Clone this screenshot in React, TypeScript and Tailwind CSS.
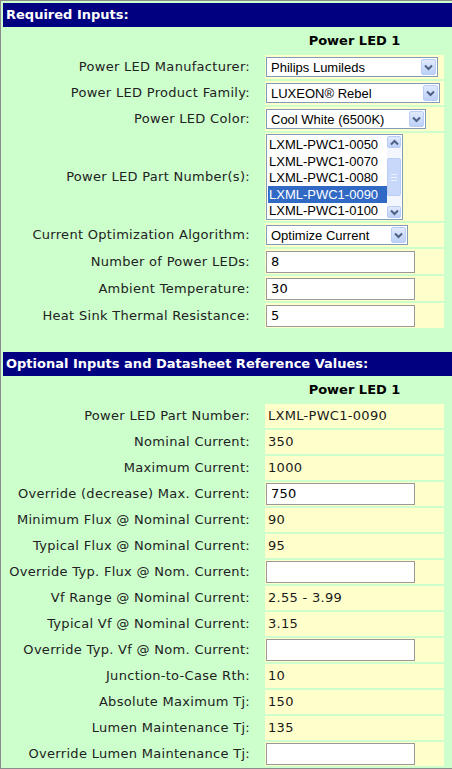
import React from "react";

const verdana = "font-['DejaVu_Sans',Verdana,sans-serif]";
const arial = "font-['Liberation_Sans',Arial,sans-serif]";

interface FieldRow {
  label: string;
  value?: string;
  input?: string;
}

const datasheetRows: FieldRow[] = [
  { label: "Power LED Part Number:", value: "LXML-PWC1-0090" },
  { label: "Nominal Current:", value: "350" },
  { label: "Maximum Current:", value: "1000" },
  { label: "Override (decrease) Max. Current:", input: "750" },
  { label: "Minimum Flux @ Nominal Current:", value: "90" },
  { label: "Typical Flux @ Nominal Current:", value: "95" },
  { label: "Override Typ. Flux @ Nom. Current:", input: "" },
  { label: "Vf Range @ Nominal Current:", value: "2.55 - 3.99" },
  { label: "Typical Vf @ Nominal Current:", value: "3.15" },
  { label: "Override Typ. Vf @ Nom. Current:", input: "" },
  { label: "Junction-to-Case Rth:", value: "10" },
  { label: "Absolute Maximum Tj:", value: "150" },
  { label: "Lumen Maintenance Tj:", value: "135" },
  { label: "Override Lumen Maintenance Tj:", input: "" },
];

const partNumbers = [
  "LXML-PWC1-0050",
  "LXML-PWC1-0070",
  "LXML-PWC1-0080",
  "LXML-PWC1-0090",
  "LXML-PWC1-0100",
];

const Chevron: React.FC<{ up?: boolean }> = ({ up }) => (
  <svg width="9" height="7" viewBox="0 0 9 7">
    <path
      d={up ? "M1 5.5 L4.5 2 L8 5.5" : "M1 1.5 L4.5 5 L8 1.5"}
      fill="none"
      stroke="#4d6185"
      strokeWidth="2"
    />
  </svg>
);

const XpButton: React.FC<{ up?: boolean; className?: string }> = ({
  up,
  className = "",
}) => (
  <div
    className={`flex items-center justify-center rounded-[2px] border border-[#b9cdf7] bg-gradient-to-b from-[#e1eafe] to-[#bcd0f8] ${className}`}
  >
    <Chevron up={up} />
  </div>
);

const Dropdown: React.FC<{ text: string; width: string }> = ({
  text,
  width,
}) => (
  <div
    className={`flex h-[20px] items-center justify-between border border-[#7f9db9] bg-white pl-[4px] pr-[1px] ${width}`}
  >
    <span className={`${arial} text-[13px] leading-none text-black`}>
      {text}
    </span>
    <XpButton className="h-[16px] w-[15px]" />
  </div>
);

const TextBox: React.FC<{ value: string }> = ({ value }) => (
  <div
    className={`flex h-[22px] w-[149px] items-center border border-[#999] bg-white pl-[4px] ${verdana} text-[13px] tracking-[0.2px] text-black`}
  >
    {value}
  </div>
);

const PartList: React.FC = () => (
  <div className="flex h-[86px] w-[137px] border border-[#7f9db9] bg-white p-[1px]">
    <div className={`flex-1 pt-[1px] ${arial} text-[13px]`}>
      {partNumbers.map((p) => (
        <div
          key={p}
          className={`flex h-[16.4px] items-center pl-[1px] ${
            p === "LXML-PWC1-0090"
              ? "bg-[#316ac5] text-white"
              : "text-black"
          }`}
        >
          {p}
        </div>
      ))}
    </div>
    <div className="flex w-[14px] flex-col bg-[#f3f6fd]">
      <XpButton up className="h-[15px]" />
      <div className="flex flex-1 flex-col justify-center py-[10px]">
        <div className="flex h-[38px] flex-col items-center justify-center gap-[2px] rounded-[2px] border border-[#b9cdf7] bg-[#c8d8fb]">
          <div className="h-px w-[6px] bg-[#eef3ff]" />
          <div className="h-px w-[6px] bg-[#eef3ff]" />
          <div className="h-px w-[6px] bg-[#eef3ff]" />
        </div>
      </div>
      <XpButton className="h-[15px]" />
    </div>
  </div>
);

const SectionBar: React.FC<{ title: string }> = ({ title }) => (
  <div
    className={`flex h-[24px] items-center bg-[#000080] pl-[3px] ${verdana} text-[13px] font-bold text-white`}
  >
    {title}
  </div>
);

const Label: React.FC<{ text: string; h: string }> = ({ text, h }) => (
  <div
    className={`flex ${h} items-center justify-end pr-[13px] ${verdana} text-[13px] tracking-[0.3px] text-[#222]`}
  >
    {text}
  </div>
);

const Cell: React.FC<{ h: string; children?: React.ReactNode }> = ({
  h,
  children,
}) => (
  <div className={`flex ${h} items-center bg-[#ffffcc] pl-[1px]`}>
    {children}
  </div>
);

const ColumnTitle: React.FC<{ h: string }> = ({ h }) => (
  <>
    <div className={h} />
    <div
      className={`flex ${h} items-center justify-center ${verdana} text-[13px] font-bold text-black`}
    >
      Power LED 1
    </div>
  </>
);

export default function App() {
  return (
    <div className="h-[769px] w-[452px] overflow-hidden border-b border-l border-t border-[#8c8c8c] bg-[#ccffcc] pl-[2px] pt-[2px]">
      <SectionBar title="Required Inputs:" />
      <div className="grid grid-cols-[258px_179px] gap-[2px] p-[2px]">
        <ColumnTitle h="h-[24px]" />

        <Label text="Power LED Manufacturer:" h="h-[24px]" />
        <Cell h="h-[24px]">
          <Dropdown text="Philips Lumileds" width="w-[172px]" />
        </Cell>

        <Label text="Power LED Product Family:" h="h-[24px]" />
        <Cell h="h-[24px]">
          <Dropdown text="LUXEON® Rebel" width="w-[174px]" />
        </Cell>

        <Label text="Power LED Color:" h="h-[24px]" />
        <Cell h="h-[24px]">
          <Dropdown text="Cool White (6500K)" width="w-[160px]" />
        </Cell>

        <Label text="Power LED Part Number(s):" h="h-[88px]" />
        <Cell h="h-[88px]">
          <PartList />
        </Cell>

        <Label text="Current Optimization Algorithm:" h="h-[24px]" />
        <Cell h="h-[24px]">
          <Dropdown text="Optimize Current" width="w-[142px]" />
        </Cell>

        <Label text="Number of Power LEDs:" h="h-[25px]" />
        <Cell h="h-[25px]">
          <TextBox value="8" />
        </Cell>

        <Label text="Ambient Temperature:" h="h-[25px]" />
        <Cell h="h-[25px]">
          <TextBox value="30" />
        </Cell>

        <Label text="Heat Sink Thermal Resistance:" h="h-[25px]" />
        <Cell h="h-[25px]">
          <TextBox value="5" />
        </Cell>
      </div>

      <div className="mt-[22px]">
        <SectionBar title="Optional Inputs and Datasheet Reference Values:" />
      </div>
      <div className="grid grid-cols-[258px_179px] gap-[2px] p-[2px]">
        <ColumnTitle h="h-[24px]" />
        {datasheetRows.map((row) => (
          <React.Fragment key={row.label}>
            <Label text={row.label} h="h-[24px]" />
            <Cell h="h-[24px]">
              {row.input !== undefined ? (
                <TextBox value={row.input} />
              ) : (
                <span
                  className={`pl-[2px] ${verdana} text-[13px] tracking-[0.3px] text-[#1a1a1a]`}
                >
                  {row.value}
                </span>
              )}
            </Cell>
          </React.Fragment>
        ))}
      </div>
    </div>
  );
}
